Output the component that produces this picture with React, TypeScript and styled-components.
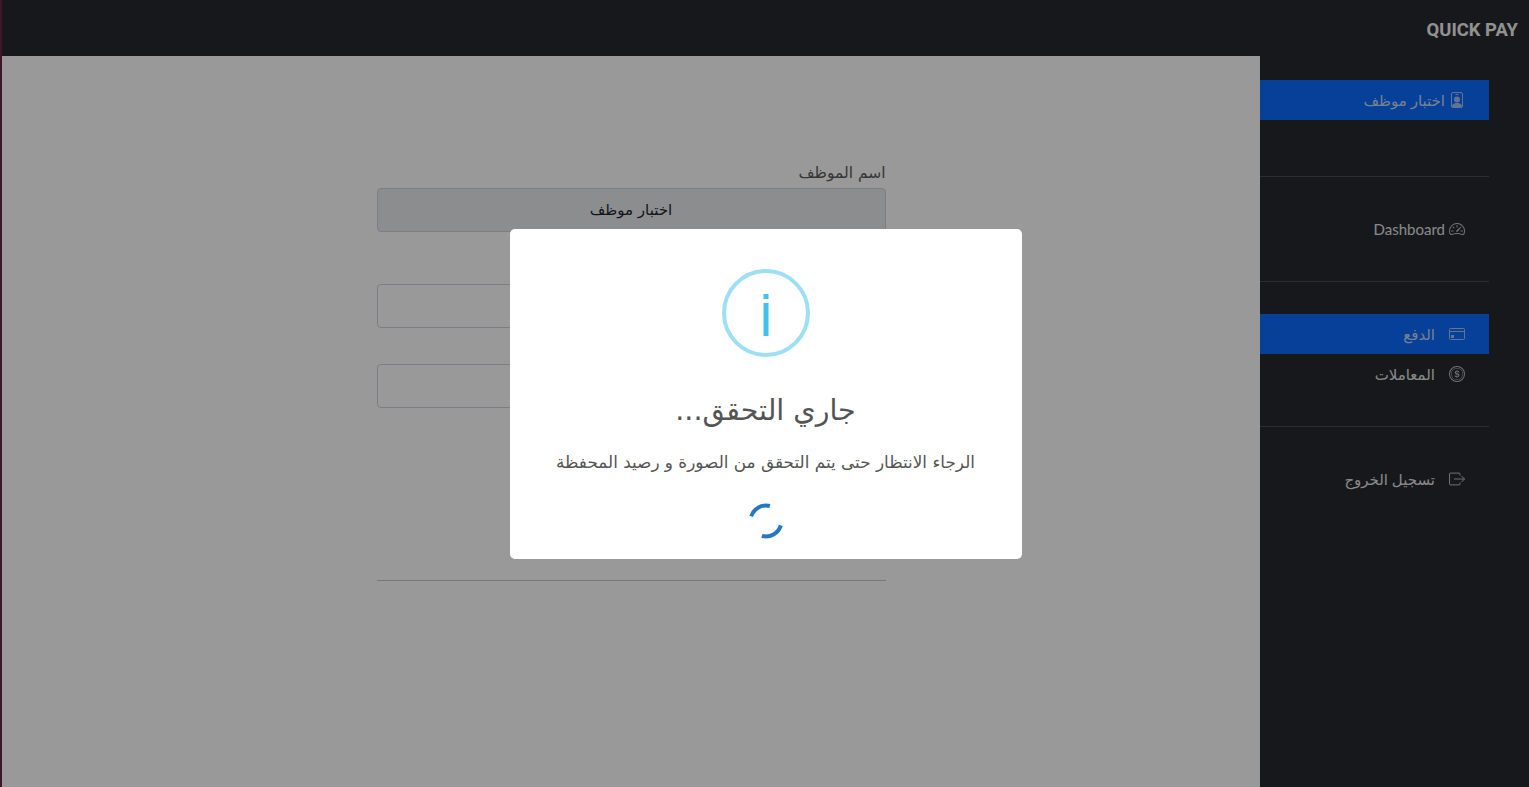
import React from 'react';
import styled, { createGlobalStyle } from 'styled-components';
import { BsCoin, BsSpeedometer2 } from 'react-icons/bs';

const GlobalStyle = createGlobalStyle`
	html, body {
		margin: 0;
		padding: 0;
		height: 100%;
		overflow: hidden;
		background: #ffffff;
		font-family: 'DejaVu Sans', 'Noto Sans', sans-serif;
	}
	* {
		box-sizing: border-box;
	}
`;

const Page = styled.div`
	display: flex;
	flex-direction: column;
	height: 100vh;
	border-left: 2px solid #6a2348;
`;

const TopBar = styled.header`
	flex: 0 0 56px;
	display: flex;
	align-items: center;
	padding: 2px 11px 0 0;
	background: #25282e;
`;

const Brand = styled.div`
	font-family: 'Roboto', sans-serif;
	font-size: 18.4px;
	font-weight: 700;
	color: #f2f2f2;
	direction: ltr;
`;

const Body = styled.div`
	flex: 1;
	display: flex;
	min-height: 0;
`;

const Sidebar = styled.aside`
	flex: 0 0 269px;
	padding: 24px 40px 0 0;
	background: #25282e;
`;

const NavGroup = styled.div<{ $spaceBelow?: number }>`
	padding-bottom: ${(p) => p.$spaceBelow ?? 0}px;
`;

const Divider = styled.hr`
	height: 1px;
	margin: 32px 0;
	border: 0;
	background: #4a4b52;
`;

const NavItem = styled.a<{ $active?: boolean; $gap: number }>`
	display: flex;
	align-items: center;
	gap: ${(p) => p.$gap}px;
	height: 40px;
	padding-right: 24px;
	font-family: 'Lato', 'DejaVu Sans', sans-serif;
	font-size: 15px;
	color: ${(p) => (p.$active ? '#c9d8f2' : '#e4e4e4')};
	background: ${(p) => (p.$active ? '#0c6bff' : 'transparent')};
	svg {
		flex: 0 0 16px;
		width: 16px;
		height: 16px;
		opacity: 0.8;
	}
`;

const Content = styled.main`
	flex: 1;
	display: flex;
	justify-content: center;
	padding-top: 106px;
	background: #ffffff;
`;

const FormColumn = styled.div`
	width: 509px;
`;

const FieldLabel = styled.label`
	display: block;
	height: 26px;
	font-size: 15.5px;
	line-height: 22px;
	color: #5a5a5a;
`;

const PickerButton = styled.div`
	display: flex;
	align-items: center;
	justify-content: center;
	height: 44px;
	margin-bottom: 52px;
	font-size: 15px;
	color: #212529;
	background: #e9ecef;
	border: 1px solid #ced4da;
	border-radius: 4px;
`;

const TextField = styled.div`
	height: 44px;
	margin-bottom: 36px;
	background: #ffffff;
	border: 1px solid #ced4da;
	border-radius: 4px;
`;

const FormRule = styled.hr`
	height: 1px;
	margin: 172px 0 0;
	border: 0;
	background: #c8c8c8;
`;

const Overlay = styled.div`
	position: fixed;
	inset: 0;
	display: flex;
	align-items: center;
	justify-content: center;
	padding-left: 2px;
	background: rgba(0, 0, 0, 0.4);
`;

const Modal = styled.div`
	display: flex;
	flex-direction: column;
	align-items: center;
	width: 512px;
	height: 330px;
	padding-top: 40px;
	background: #ffffff;
	border-radius: 5px;
`;

const ModalTitle = styled.h2`
	margin: 32px 0 0;
	font-size: 28.5px;
	font-weight: 400;
	line-height: 44px;
	color: #545454;
`;

const ModalText = styled.p`
	margin: 16px 0 0;
	font-size: 16.85px;
	line-height: 26px;
	color: #545454;
`;

const SpinnerWrap = styled.div`
	margin-top: 28px;
	line-height: 0;
`;

const InfoIcon = () => (
	<svg width="88" height="88" viewBox="0 0 88 88" fill="none">
		<circle cx="44" cy="44" r="42" stroke="#9de0f6" strokeWidth="4" />
		<rect x="41.5" y="25" width="5" height="5" fill="#3fc3ee" />
		<rect x="41.5" y="34" width="5" height="33" fill="#3fc3ee" />
	</svg>
);

const BadgeIcon = () => (
	<svg viewBox="0 0 16 16" fill="none" stroke="currentColor" strokeWidth="1">
		<rect x="2.5" y="0.5" width="11" height="15" rx="1.5" />
		<path d="M6.5 2.5h3" />
		<circle cx="8" cy="7.5" r="3" fill="currentColor" stroke="none" />
		<path d="M3 13.5c1-2 3-2.5 5-2.5s4 .5 5 2.5v1.5H3z" fill="currentColor" stroke="none" />
	</svg>
);

const CardIcon = () => (
	<svg viewBox="0 0 16 16" fill="none" stroke="currentColor" strokeWidth="1">
		<rect x="0.5" y="2.5" width="15" height="11" rx="1" />
		<path d="M0.5 5.5h15" />
		<rect x="2" y="9" width="3" height="3" fill="currentColor" stroke="none" />
	</svg>
);

const LogoutIcon = () => (
	<svg viewBox="0 0 16 16" fill="none" stroke="currentColor" strokeWidth="1">
		<path d="M11 4.5V3a.9.9 0 0 0-.9-.9H1.4a.9.9 0 0 0-.9.9v10a.9.9 0 0 0 .9.9h8.700a.9.9 0 0 0 .9-.9v-1.500" />
		<path d="M5 8h10.500M12.500 5l3 3-3 3" />
	</svg>
);

const Spinner = () => (
	<svg width="36" height="36" viewBox="0 0 36 36" fill="none">
		<path d="M3.2 13.3 A15.5 15.5 0 0 1 21.900 3" stroke="#2778c4" strokeWidth="4" />
		<path d="M32.800 22.400 A15.5 15.5 0 0 1 13.900 33" stroke="#2778c4" strokeWidth="4" />
	</svg>
);

const App = () => (
	<>
		<GlobalStyle />
		<Page dir="rtl">
			<TopBar>
				<Brand>QUICK PAY</Brand>
			</TopBar>
			<Body>
				<Sidebar>
					<NavGroup $spaceBelow={24}>
						<NavItem $active $gap={4}>
							<BadgeIcon />
							اختبار موظف
						</NavItem>
					</NavGroup>
					<Divider />
					<NavItem $gap={4}>
						<BsSpeedometer2 />
						Dashboard
					</NavItem>
					<Divider />
					<NavGroup>
						<NavItem $active $gap={14}>
							<CardIcon />
							الدفع
						</NavItem>
						<NavItem $gap={14}>
							<BsCoin />
							المعاملات
						</NavItem>
					</NavGroup>
					<Divider />
					<NavItem $gap={14}>
						<LogoutIcon />
						تسجيل الخروج
					</NavItem>
				</Sidebar>
				<Content>
					<FormColumn>
						<FieldLabel>اسم الموظف</FieldLabel>
						<PickerButton>اختبار موظف</PickerButton>
						<TextField />
						<TextField />
						<FormRule />
					</FormColumn>
				</Content>
			</Body>
		</Page>
		<Overlay dir="rtl">
			<Modal>
				<InfoIcon />
				<ModalTitle>جاري التحقق...</ModalTitle>
				<ModalText>الرجاء الانتظار حتى يتم التحقق من الصورة و رصيد المحفظة</ModalText>
				<SpinnerWrap>
					<Spinner />
				</SpinnerWrap>
			</Modal>
		</Overlay>
	</>
);

export default App;
